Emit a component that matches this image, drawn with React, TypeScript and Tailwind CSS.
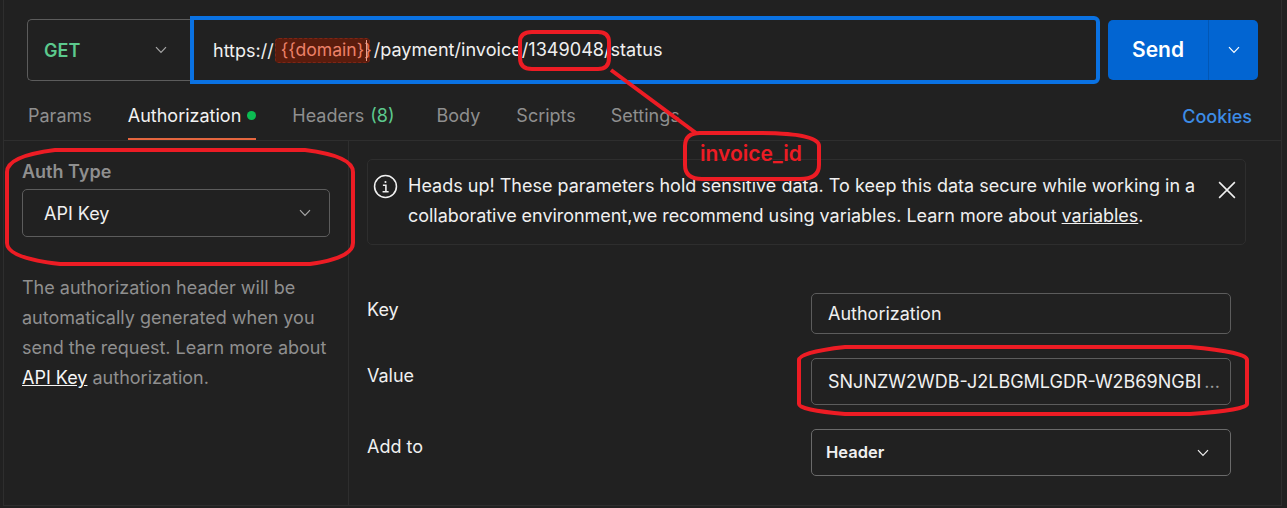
import React from "react";

function Chevron({ className }: { className: string }) {
  return (
    <svg viewBox="0 0 12 8" fill="none" className={className} stroke="currentColor" strokeWidth="1.2">
      <path d="M1 1.2 L6 6.4 L11 1.2" />
    </svg>
  );
}

function Tab({ label, active, children }: { label: string; active?: boolean; children?: React.ReactNode }) {
  return (
    <div className={`flex h-full items-center gap-[6px] border-b-2 pb-[3px] ${active ? "border-[#e5663f] text-[#f2f2f2]" : "border-transparent text-[#8f8f8f]"}`}>
      <span>{label}</span>
      {children}
    </div>
  );
}

function Annotations() {
  return (
    <svg className="absolute left-0 top-0 h-[508px] w-[1287px]" viewBox="0 0 1287 508" fill="none" stroke="#ed1c24" strokeWidth="4">
      <path d="M532 32 Q520 32 520 42 L520 58 Q520 69 532 69 L598 69 Q609 69 609 58 L609 42 Q609 32 598 32 Z" />
      <path d="M611 70 L696 133" />
      <path d="M700 133 L758 133 Q819 133 819 146 L819 165 Q819 179 800 179 L702 179 Q685 179 685 165 L685 146 Q685 133 700 133 Z" />
      <path d="M55 150 L305 150 Q353 156 353 172 L353 243 Q353 258 310 264 L60 264 Q7 258 7 243 L7 172 Q7 156 55 150 Z" />
      <path d="M845 347 L1190 347 Q1247 352 1247 360 L1247 404 Q1247 410 1190 414 L845 414 Q799 410 799 404 L799 360 Q799 352 845 347 Z" />
    </svg>
  );
}

export default function App() {
  return (
    <div className="relative h-[508px] w-[1287px] overflow-hidden bg-[#212121] pl-[3px] pr-[5px] font-['Inter','Liberation_Sans',sans-serif] text-[18px] text-[#f0f0f0]">
      <div className="flex h-[506px] flex-col border-x border-b border-[#2e2e2e]">
        <div className="flex h-[96px] items-center pt-[4px] pl-[23px]">
          <div className="flex h-[62px] w-[164px] shrink-0 items-center justify-between rounded-l-[5px] border border-r-0 border-[#5c5c5c] pl-[16px] pr-[23px]">
            <span className="font-semibold text-[#5cc98d]">GET</span>
            <Chevron className="h-[8px] w-[14px] text-[#a6a6a6]" />
          </div>
          <div className="-ml-px flex h-[68px] w-[910px] shrink-0 items-center whitespace-nowrap rounded-r-[6px] border-4 border-[#0a72e3] pl-[19px]">
            <span>https://</span>
            <span className="relative ml-[1px] flex h-[25px] w-[95px] items-center rounded-[4px] border border-dashed border-[#7f2516] bg-[#5a1c0d] pl-[5px] text-[17.6px] text-[#ec8169]">
              {"{{domain}}"}
              <span className="absolute right-[2px] top-[1px] h-[21px] w-px bg-[#f0a08c]" />
            </span>
            <span className="ml-[4px] text-[18.1px]">/payment/invoice/1349048/status</span>
          </div>
          <div className="ml-[8px] flex h-[60px] w-[150px] shrink-0 items-center rounded-[5px] bg-[#0265d2] text-white">
            <div className="flex h-full w-[101px] items-center justify-center border-r border-[#0257b5] text-[21px] font-semibold">Send</div>
            <div className="flex flex-1 items-center justify-center">
              <Chevron className="h-[8px] w-[14px]" />
            </div>
          </div>
        </div>
        <div className="flex h-[45px] items-center border-b border-[#2e2e2e] pl-[24px] pr-[29px]">
          <Tab label="Params" />
          <div className="ml-[36px] h-full">
            <Tab label="Authorization" active>
              <span className="h-[9px] w-[9px] rounded-full bg-[#0cbb52]" />
            </Tab>
          </div>
          <div className="ml-[36px] h-full">
            <Tab label="Headers">
              <span className="text-[#5cc98d]">(8)</span>
            </Tab>
          </div>
          <div className="ml-[42px] h-full"><Tab label="Body" /></div>
          <div className="ml-[36px] h-full"><Tab label="Scripts" /></div>
          <div className="ml-[35px] h-full"><Tab label="Settings" /></div>
          <span className="-mt-[3px] ml-auto font-medium text-[#3d8ce6]">Cookies</span>
        </div>
        <div className="flex flex-1">
          <div className="w-[345px] shrink-0 border-r border-[#2e2e2e] pl-[18px] pr-[14px] pt-[19px]">
            <div className="font-semibold leading-[24px] text-[#8f8f8f]">Auth Type</div>
            <div className="mt-[5px] flex h-[48px] w-[308px] items-center justify-between rounded-[5px] border border-[#5c5c5c] pl-[21px] pr-[17px]">
              <span>API Key</span>
              <Chevron className="h-[8px] w-[14px] text-[#a6a6a6]" />
            </div>
            <p className="mt-[36px] leading-[30px] text-[#8f8f8f]">
              The authorization header will be automatically generated when you send the request. Learn more about{" "}
              <span className="text-[#f5f5f5] underline">API Key</span> authorization.
            </p>
          </div>
          <div className="flex-1 pl-[18px] pt-[18px]">
            <div className="relative flex h-[86px] w-[879px] items-start rounded-[5px] border border-[#2e2e2e] pl-[5px] pt-[11px]">
              <svg viewBox="0 0 24 24" className="mt-[3px] h-[25px] w-[25px] shrink-0" fill="none" stroke="#f0f0f0" strokeWidth="1.5">
                <circle cx="12" cy="12" r="10.5" />
                <circle cx="12" cy="7.6" r="1" fill="#f0f0f0" stroke="none" />
                <path d="M9.5 10.8 H12.4 V16.8 M9.2 17 H15" />
              </svg>
              <p className="ml-[10px] w-[800px] leading-[30px]">
                Heads up! These parameters hold sensitive data. To keep this data secure while working in a{" "}
                <span className="tracking-[-0.04px]">
                  collaborative environment,we recommend using variables. Learn more about{" "}
                  <span className="underline">variables</span>.
                </span>
              </p>
              <svg viewBox="0 0 16 16" className="absolute right-[9px] top-[21px] h-[18px] w-[18px]" fill="none" stroke="#f0f0f0" strokeWidth="1.4">
                <path d="M1 1 L15 15 M15 1 L1 15" />
              </svg>
            </div>
            <div className="mt-[47px] flex w-[864px] flex-col">
              <div className="flex h-[42px] items-center justify-between">
                <span className="-mt-[7px]">Key</span>
                <div className="flex h-[41px] w-[420px] items-center rounded-[5px] border border-[#5c5c5c] pl-[16px]">Authorization</div>
              </div>
              <div className="mt-[24px] flex h-[47px] items-center justify-between">
                <span className="-mt-[13px]">Value</span>
                <div className="flex h-[47px] w-[420px] items-center whitespace-nowrap rounded-[5px] border border-[#5c5c5c] pl-[16px]">
                  <span>SNJNZW2WDB-J2LBGMLGDR-W2B69NGBI</span>
                  <span className="ml-[3px] text-[#9a9a9a]">...</span>
                </div>
              </div>
              <div className="mt-[24px] flex h-[47px] items-center justify-between">
                <span className="-mt-[12px]">Add to</span>
                <div className="flex h-[47px] w-[420px] items-center justify-between rounded-[5px] border border-[#6a6a6a] pl-[14px] pr-[20px]">
                  <span className="text-[16.5px] font-semibold">Header</span>
                  <Chevron className="h-[8px] w-[14px]" />
                </div>
              </div>
            </div>
          </div>
        </div>
      </div>
      <Annotations />
      <span className="absolute left-[700px] top-[138px] text-[21px] font-semibold text-[#ed1c24]">invoice_id</span>
    </div>
  );
}
